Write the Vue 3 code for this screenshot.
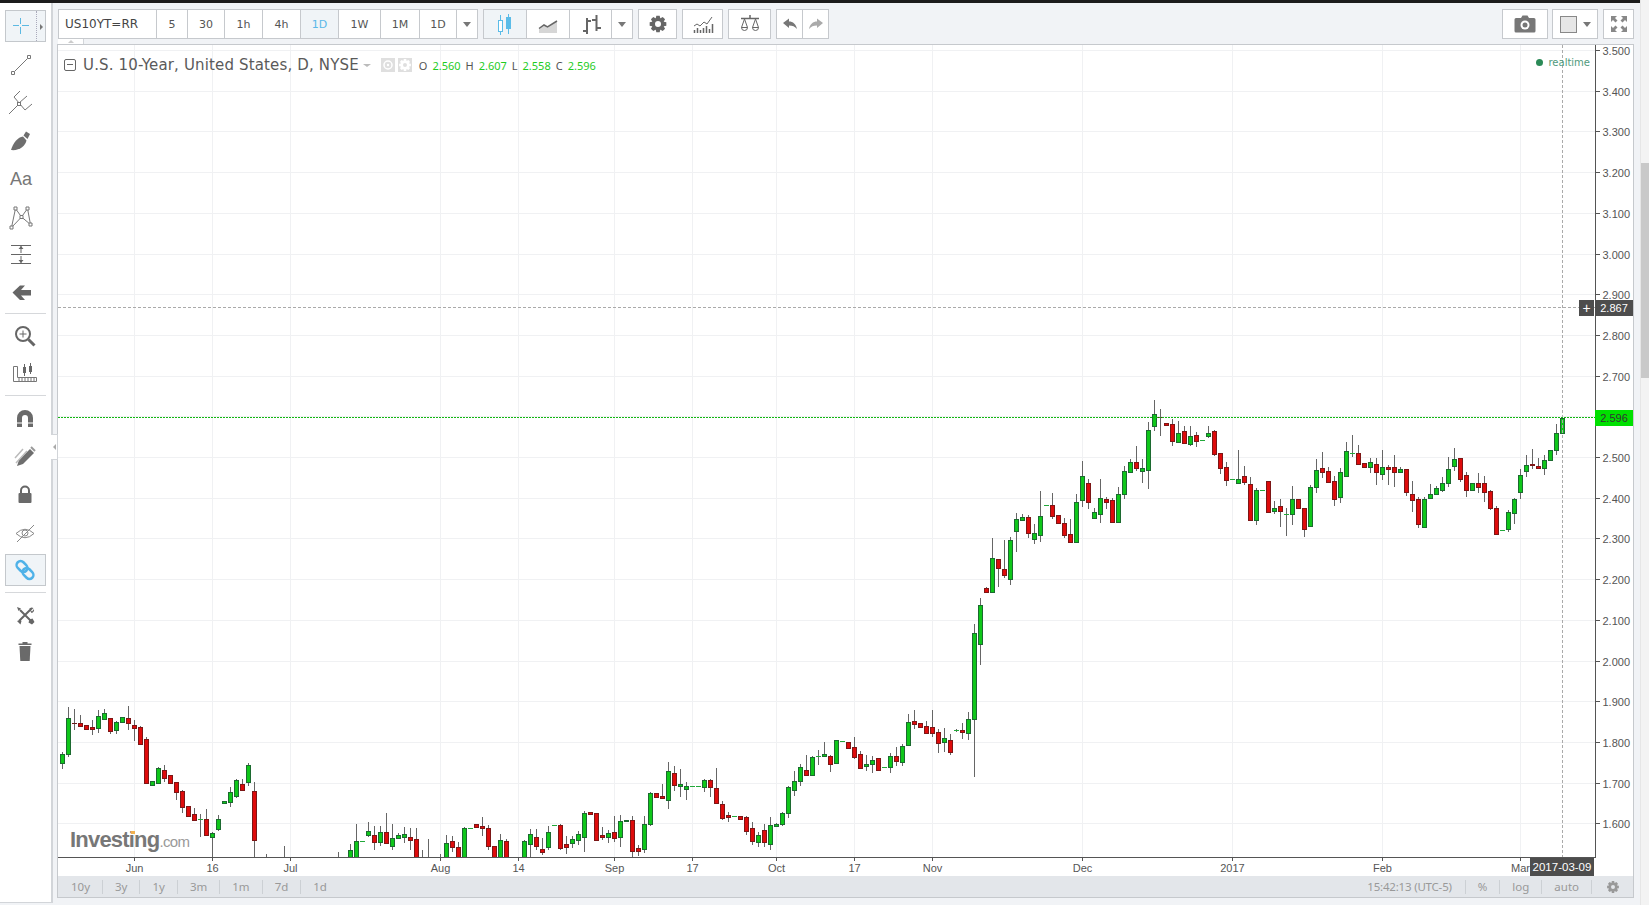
<script setup>
const g = 1, r = 0
const N = null
const candles = []
function seg(start, base, list) {
  list.forEach((c, k) => {
    if (!c) return
    const [wt, bt, bb, wb, col] = c
    const y = z => Math.round(base + z / 3)
    candles.push({
      x: 62.5 + 6 * (start + k),
      wt: wt == null ? null : y(wt),
      wb: wb == null ? null : y(wb),
      bt: bt == null ? null : y(bt),
      bb: bb == null ? null : y(bb),
      up: col === g
    })
  })
}
seg(0, 690, [
  [185,192,218,237,g],[52,85,191,200,g],[57,100,100,120,r],[75,100,107,110,r],[105,106,116,117,r],
  [90,111,116,135,r],[60,79,113,130,g],[57,70,86,90,g],[84,85,122,132,r],[92,97,119,132,g],
  [80,82,97,100,g],[48,85,98,120,r],[90,105,113,152,r],[108,112,161,162,r],[142,148,278,281,r],
  [273,274,284,285,g],[232,235,278,280,g],[226,241,263,276,r],[255,256,278,282,r],[277,277,305,330,r],
  [300,304,350,368,r],[349,349,377,378,r],[355,373,389,392,r],[372,388,388,440,g],[357,388,434,435,r],
  [425,430,440,510,g],[376,388,416,422,g],[334,334,338,338,g],[292,307,335,350,g],[268,271,317,325,g],
  [268,283,299,302,r],[220,226,277,288,g],[277,304,449,510,r],N,[492,N,N,510,r],
  N,N,[468,N,N,510,r],N,N,N,N,N,N,N,N,[487,N,N,510,r],N,
  [462,481,520,520,g],[403,454,520,520,g],[454,454,454,454,g],[396,424,434,440,g],[408,436,455,480,r],
  [408,427,455,468,g],[370,427,458,460,r],[403,445,467,480,g],[430,436,445,447,g],[411,433,440,460,g],
  [414,442,449,480,r],[414,448,520,520,r],[480,N,N,510,r],[447,N,N,510,r],N,[492,N,N,510,r],
  [436,460,520,520,g],[438,454,470,486,r],[457,472,520,520,r],[412,415,520,520,g],[415,415,415,415,g],
  [403,403,410,410,r],[382,409,413,438,r],[406,415,467,480,r],[468,468,520,520,r],[433,451,520,520,g],
  [448,454,520,520,r]
])
seg(77, 690, [
  [450,454,520,520,g],[418,433,461,510,g],[418,442,467,480,r],[445,478,485,495,r],[408,427,470,480,g],
  [406,406,406,406,g],[403,406,473,480,r],[438,463,470,492,r],[438,448,458,473,g],[422,431,449,465,g],
  [362,370,440,485,g],[365,367,371,372,r],[370,370,449,452,r],[410,436,440,450,r],[420,430,440,460,g],
  [378,427,443,455,r],[376,394,440,470,g],[391,391,394,394,g],[378,391,482,520,r],[465,475,482,497,r],
  [378,403,476,488,g],[306,310,401,408,g],[310,310,320,320,r],[282,319,325,328,r],[216,244,329,356,g],
  [228,250,284,303,r],[237,283,287,320,g],[276,289,296,330,g],[289,289,289,289,g],[289,289,289,289,g],
  [268,271,290,306,g],[267,271,290,320,r],[234,295,338,338,r],[334,343,383,390,r],[365,376,380,396,r],
  [379,379,379,379,g],[378,378,387,387,r],[378,382,422,434,r],[397,415,452,465,r],[425,436,455,470,g],
  [403,421,455,470,r],[381,406,461,479,g],[398,403,407,408,g],[367,370,403,408,g],[288,292,368,385,g],
  [243,274,299,318,g],[222,232,272,287,g],[195,241,254,257,r],[197,202,254,255,g],[180,199,199,225,g],
  [157,193,197,200,g],[195,199,223,245,r],[150,151,218,218,g],[154,154,154,154,g],[155,155,173,173,r],
  [142,172,200,208,r],[182,193,233,234,r],[195,222,228,243,g],[198,211,221,248,g],[205,205,239,242,r],
  [232,232,232,232,g],[188,199,230,248,g],[170,199,212,228,r],[162,169,215,228,g],[72,97,164,166,g],
  [60,94,101,117,r],[100,100,110,112,r],[93,109,128,128,r],[60,112,128,140,r],[118,125,158,188,r],
  [115,145,155,186,g],[132,151,186,195,r],[117,121,121,125,g],[100,120,125,146,r],[67,88,128,150,g]
])
seg(152, 480, [
  [432,460,718,890,g],[355,376,493,555,g],[322,325,335,336,r],[175,235,335,337,g],[238,238,265,320,r],
  [180,268,284,293,r],[170,181,296,315,g],[100,118,152,215,g],[103,112,119,120,g],[105,112,160,173,r],
  [132,160,176,192,g],[33,109,164,185,g],[75,75,75,75,g],[40,76,107,117,r],[105,106,128,132,r],
  [115,130,164,175,r],[118,163,187,188,r],[42,67,185,188,g]
])
seg(170, 390, [
  [213,259,329,352,g],[267,280,335,357,r],[354,367,383,384,g],[267,325,371,398,g],[322,328,335,357,r],
  [325,331,395,397,r],[292,313,395,398,g],[228,244,311,327,g],[208,217,245,245,g],[168,217,233,242,r],
  [208,234,242,278,g],[97,121,239,297,g],[30,73,107,123,g],[58,82,82,138,r],[99,99,104,104,r],
  [87,103,152,167,r],[93,130,155,155,g],[108,124,158,158,r],[108,139,161,167,g],[125,135,152,170,r],
  [151,151,151,151,g],[108,129,137,145,g],[120,124,191,197,r],[190,190,233,252,r],[215,232,269,288,r],
  [268,268,268,268,g],[180,268,278,279,g],[228,259,275,285,r],[262,283,389,392,r],[295,301,389,405,g],
  [301,301,301,301,g],[274,274,365,367,r],[333,354,362,373,g],[327,349,362,410,r],[355,372,372,437,g],
  [288,328,371,405,g],[327,328,353,357,r],[355,355,418,440,r],[285,292,407,410,g],[207,241,292,308,g],
  [186,235,245,263,r],[232,244,277,278,r],[258,274,326,348,r]
])
seg(213, 280, [
  [565,577,650,668,g],[487,514,587,592,g],[465,520,520,530,g],[495,520,551,553,r],[549,550,560,562,r],
  [535,547,560,578,g],[533,553,575,614,r],[510,562,581,600,g],[555,562,566,615,r],[525,562,575,620,r],
  [560,568,575,578,g],[568,568,635,647,r],[603,643,659,695,r],[650,658,731,745,r],[652,658,742,745,g],
  [612,643,655,656,g],[617,625,643,645,g],[590,610,629,635,g],[530,568,610,620,g],[504,538,559,572,g],
  [535,535,598,607,r],[577,586,631,652,r],[610,610,631,632,g],[578,610,620,640,r],[588,610,637,665,r],
  [630,634,685,690,r],[678,685,762,764,r],[751,751,751,751,g],[690,697,748,755,g],[655,658,700,732,g],
  [568,586,637,657,g],[525,556,574,590,g],[507,553,556,566,r],[535,559,563,565,r],[525,541,565,585,g],
  [510,511,541,542,g],[432,460,509,525,g],[405,414,460,462,g]
])

const gridX = [134, 212, 290, 440, 518, 614, 692, 776, 854, 932, 1082, 1232, 1382, 1520]
const prices = Array.from({ length: 20 }, (_, k) => ({
  label: (3.5 - 0.1 * k).toFixed(3),
  y: Math.round(50 + 40.7 * k) + 0.5
}))
const dates = [
  ['Jun', 134], ['16', 212], ['Jul', 290], ['Aug', 440], ['14', 518], ['Sep', 614], ['17', 692],
  ['Oct', 776], ['17', 854], ['Nov', 932], ['Dec', 1082], ['2017', 1232], ['Feb', 1382], ['Mar', 1520]
]
const intervals = [
  { t: '5', w: 32 }, { t: '30', w: 38 }, { t: '1h', w: 39 }, { t: '4h', w: 39 },
  { t: '1D', w: 39, on: true }, { t: '1W', w: 43 }, { t: '1M', w: 40 }, { t: '1D', w: 38 }
]
const ranges = ['10y', '3y', '1y', '3m', '1m', '7d', '1d']

function gear(cx, cy, ro, ri, h, n) {
  const pts = []
  for (let i = 0; i < n; i++) {
    const a = (i / n) * Math.PI * 2
    const s = Math.PI / n
    ;[[ri, -s * 0.95], [ro, -s * 0.5], [ro, s * 0.5], [ri, s * 0.95]].forEach(([rad, d]) => {
      pts.push((cx + rad * Math.cos(a + d)).toFixed(2) + ' ' + (cy + rad * Math.sin(a + d)).toFixed(2))
    })
  }
  return 'M' + pts.join('L') + 'Z' +
    `M${cx - h} ${cy}a${h} ${h} 0 1 0 ${2 * h} 0a${h} ${h} 0 1 0 ${-2 * h} 0Z`
}
const gearBig = gear(12, 12, 8.5, 6.3, 3, 8)
const gearTiny = gear(7, 7, 6, 4.4, 2, 8)
</script>

<template>
  <div class="page">
    <div class="app">
      <div class="topline"></div>
      <div class="main">
        <aside class="sidebar">
          <div class="tool selected cross">
            <svg width="30" height="30" viewBox="0 0 30 30" class="ic0"><path d="M7 14.500h6M16 14.500h7M14.500 7v6M14.500 16v7" stroke="#5cb9e2" fill="none"/></svg>
            <span class="dots"></span><span class="tri"></span>
          </div>
          <div class="tool"><svg width="30" height="30" viewBox="0 0 30 30" class="ic"><path d="M8.500 21.500 21.500 8.500" stroke="#777"/><path d="M5.500 21.500h3v3h-3zM21.500 5.500h3v3h-3z" fill="#fff" stroke="#777"/></svg></div>
          <div class="tool"><svg width="30" height="30" viewBox="0 0 30 30" class="ic"><path d="M3 26 13 16M8 9l11 13M8 9l6-6M13 15l8-7M19 22l7-6" stroke="#777" fill="none"/><rect x="11.500" y="14.500" width="3" height="3" fill="#fff" stroke="#777"/></svg></div>
          <div class="tool"><svg width="30" height="30" viewBox="0 0 30 30" class="ic"><path d="M5 24C7 17 12 11 17 10.500l3.500 4C19.500 20 13 25 5 24Z" fill="#6e6e6e"/><path d="M17.500 9.500 20 5.500l4 2.500-2.500 5Z" fill="#6e6e6e"/></svg></div>
          <div class="tool"><span class="aa">Aa</span></div>
          <div class="tool"><svg width="30" height="30" viewBox="0 0 30 30" class="ic"><path d="M5.500 25.500 9.500 6.500 15.500 15 21.500 6.500 24.500 22.500 15.500 15 5.500 25.500" fill="none" stroke="#777"/><path d="M4 24h3v3H4zM8 5h3v3H8zM14 13.500h3v3h-3zM20 5h3v3h-3zM23 21h3v3h-3z" fill="#fff" stroke="#777"/></svg></div>
          <div class="tool"><svg width="30" height="30" viewBox="0 0 30 30" class="ic"><path d="M5 5.500h20M5 14.500h20M5 23.500h20M15 6v7M15 16v7" stroke="#666" fill="none"/><path d="M12.500 9 15 6l2.500 3ZM12.500 20l2.500 3 2.500-3Z" fill="#666"/></svg></div>
          <div class="tool"><svg width="30" height="30" viewBox="0 0 30 30" class="ic"><path d="M6.500 14.500 14 7.500h5l-4 4.500h10v5.500H15l4 4.500h-5Z" fill="#666"/></svg></div>
          <hr class="sep a" />
          <div class="tool"><svg width="30" height="30" viewBox="0 0 30 30" class="ic ic2"><circle cx="13" cy="13" r="7" fill="none" stroke="#666" stroke-width="2"/><path d="M9.500 13h7M13 9.500v7" stroke="#666"/><path d="m18.500 18.500 6 6" stroke="#666" stroke-width="3"/></svg></div>
          <div class="tool"><svg width="30" height="30" viewBox="0 0 30 30" class="ic ic2"><path d="M3.500 7.500v15h23v-4H7.500v-11Z" fill="none" stroke="#777"/><path d="M9 22v-3M12 22v-3M15 22v-3M18 22v-3M21 22v-3M24 22v-3" stroke="#777"/><path d="M14.500 5v12M20.500 4v11" stroke="#666"/><path d="M13 8h3v6h-3zM19 7h3v6h-3z" fill="#666"/></svg></div>
          <hr class="sep b" />
          <div class="tool"><svg width="30" height="30" viewBox="0 0 30 30" class="ic ic2"><path d="M7 23V14a8 8 0 0 1 16 0v9h-5v-9a3 3 0 0 0-6 0v9Z" fill="#6a6a6a"/><path d="M7 19h5M18 19h5" stroke="#fff"/></svg></div>
          <div class="tool"><svg width="30" height="30" viewBox="0 0 30 30" class="ic ic2"><path d="M7 24l2-6L20 7l4 4-11 11Z" fill="#6e6e6e"/><path d="M5 16 13 7M6 21 17 9" stroke="#bbb" stroke-width="1.500" fill="none"/><path d="M21 5l4 4" stroke="#999" stroke-width="2"/></svg></div>
          <div class="tool"><svg width="30" height="30" viewBox="0 0 30 30" class="ic ic2"><path d="M11 14v-3.500a4 4 0 0 1 8 0V14" fill="none" stroke="#666" stroke-width="2"/><rect x="8.500" y="13" width="13" height="10" rx="1" fill="#6a6a6a"/></svg></div>
          <div class="tool"><svg width="30" height="30" viewBox="0 0 30 30" class="ic ic2"><path d="M6 15.500Q15 7 24 15.500 15 24 6 15.500Z" fill="none" stroke="#888"/><circle cx="15" cy="15" r="3" fill="none" stroke="#888"/><path d="M7 24 24 7" stroke="#888"/></svg></div>
          <div class="tool selected link"><svg width="30" height="30" viewBox="0 0 30 30" class="ic0 ic2"><g fill="none" stroke="#4fb2e8" stroke-width="2.500"><rect x="6" y="7.500" width="12" height="8" rx="4" transform="rotate(45 12 11.500)"/><rect x="12" y="14.500" width="12" height="8" rx="4" transform="rotate(45 18 18.500)"/></g></svg></div>
          <hr class="sep c" />
          <div class="tool"><svg width="30" height="30" viewBox="0 0 30 30" class="ic ic2"><path d="M10 10 21 21M20 10 9 21" stroke="#666" stroke-width="2"/><path d="M7 7l4 1.500L8.500 11ZM19 9a3.500 3.500 0 0 1 4.500-1L21 10.500l1 1L24 9a3.500 3.500 0 0 1-2.500 4ZM19.500 19.500l3-1 2 3.500-2.500 2.500-3.500-2ZM7 21l3.500-1 1 1-1 3.500Z" fill="#666"/></svg></div>
          <div class="tool"><svg width="30" height="30" viewBox="0 0 30 30" class="ic ic2"><path d="M9.500 8h11l-.8 15h-9.400Z" fill="#6a6a6a"/><path d="M8.500 5.500h13V7h-13zM12.500 4h5v2h-5z" fill="#6a6a6a"/></svg></div>
          <div class="side-handle"><span></span></div>
        </aside>

        <section class="work">
          <div class="toolbar">
            <div class="group">
              <div class="btn symbol">US10YT=RR</div>
              <div v-for="(b, i) in intervals" :key="i" class="btn" :class="{ on: b.on }" :style="{ width: b.w + 'px' }">{{ b.t }}</div>
              <div class="btn w22"><i class="caret"></i></div>
            </div>
            <div class="group">
              <div class="btn on w44 first">
                <svg width="24" height="24" viewBox="0 0 24 24"><path d="M7.500 3v20M15.500 2v20" stroke="#5bbce8"/><rect x="5.500" y="8.500" width="4" height="11" fill="#fff" stroke="#5bbce8"/><rect x="13" y="5" width="5" height="12" fill="#5bbce8"/></svg>
              </div>
              <div class="btn w44">
                <svg width="24" height="24" viewBox="0 0 24 24"><path d="M3 16.500l5-3.500 3.500 2L21 9v12H3Z" fill="#d6d6d6"/><path d="M3 16.500l5-3.500 3.500 2L21 9" fill="none" stroke="#666" stroke-width="1.500"/></svg>
              </div>
              <div class="btn w43">
                <svg width="24" height="24" viewBox="0 0 24 24"><path d="M8 6v16M17.500 3v16" stroke="#666" stroke-width="2"/><path d="M4 19h4M8 9h4M13 8h4M17.500 16H22" stroke="#666" stroke-width="2"/></svg>
              </div>
              <div class="btn w22"><i class="caret"></i></div>
            </div>
            <div class="group">
              <div class="btn first w39"><svg width="24" height="24" viewBox="0 0 24 24"><path :d="gearBig" fill="#666" fill-rule="evenodd"/></svg></div>
            </div>
            <div class="group">
              <div class="btn first w41"><svg width="24" height="24" viewBox="0 0 24 24"><path d="M3.500 21v-3M6.500 21v-5M9.500 21v-3M12.500 21v-5M15.500 21v-7M18.500 21v-4M21.500 21v-9" stroke="#666" stroke-width="1.500"/><path d="M3 14l3-2 3 2 4-4 3 2 5-7" fill="none" stroke="#666"/></svg></div>
            </div>
            <div class="group">
              <div class="btn first w43"><svg width="24" height="24" viewBox="0 0 24 24"><path d="M3 6.500h18M12 3v3" stroke="#666" stroke-width="1.500"/><path d="M6.500 7 3.500 15.500h6ZM17.500 7l-3 8.500h6Z" fill="none" stroke="#666"/><path d="M3.500 15.500a3 3 0 0 0 6 0ZM14.500 15.500a3 3 0 0 0 6 0Z" fill="#fff" stroke="#666"/></svg></div>
            </div>
            <div class="group">
              <div class="btn first w27"><svg width="18" height="18" viewBox="0 0 18 18"><path d="M2 8 8 3.500v3c4 0 7 2.500 8 7.500-2-2.500-4.500-3.500-8-3.500V13Z" fill="#777"/></svg></div>
              <div class="btn w27"><svg width="18" height="18" viewBox="0 0 18 18"><path d="M16 8 10 3.500v3c-4 0-7 2.500-8 7.500 2-2.500 4.500-3.500 8-3.500V13Z" fill="#aaa"/></svg></div>
            </div>
            <div class="right-tools">
              <div class="btn first w46"><svg width="22" height="18" viewBox="0 0 22 18"><path d="M2 3h5l1.500-2.500h5L15 3h5a1.500 1.500 0 0 1 1.500 1.500V16a1.500 1.500 0 0 1-1.500 1.500H2A1.500 1.500 0 0 1 .5 16V4.500A1.500 1.500 0 0 1 2 3Z" fill="#777"/><circle cx="11" cy="10" r="4.500" fill="#fff"/><circle cx="11" cy="10" r="2.500" fill="#777"/></svg></div>
              <div class="btn first w46 color"><span class="swatch"></span><i class="caret"></i></div>
              <div class="btn first w31"><svg width="20" height="20" viewBox="0 0 20 20"><path d="M2 2h6L6 4l2.500 2.500L6.500 8.500 4 6 2 8ZM18 2v6l-2-2-2.500 2.500-2-2L14 4l-2-2ZM2 18v-6l2 2 2.500-2.500 2 2L6 16l2 2ZM18 18h-6l2-2-2.500-2.500 2-2L16 14l2-2Z" fill="#888"/></svg></div>
            </div>
            <div class="pull-tab"><i></i></div>
          </div>

          <div class="chart">
            <div class="chart-row">
              <div class="plot">
                <svg class="canvas" width="1537" height="812" viewBox="58 45 1537 812">
                  <g stroke="#f0f1f3">
                    <path v-for="x in gridX" :key="'v' + x" :d="`M${x + 0.5} 45V857`" />
                    <path v-for="p in prices" :key="'h' + p.y" :d="`M58 ${p.y}H1595`" />
                  </g>
                  <g v-for="(c, i) in candles" :key="i">
                    <path v-if="c.wt !== null" :d="`M${c.x} ${c.wt}V${c.wb}`" stroke="#666" />
                    <template v-if="c.bt !== null">
                      <path v-if="c.bb === c.bt" :d="`M${c.x - 2.5} ${c.bt + 0.5}h5`" :stroke="c.up ? '#22a83a' : '#6a1a1a'" />
                      <rect v-else :x="c.x - 2" :y="c.bt + 0.5" width="4" :height="c.bb - c.bt" :fill="c.up ? '#0fc71a' : '#de0b0b'" :stroke="c.up ? '#1c6a30' : '#7c1616'" />
                    </template>
                  </g>
                  <path d="M58 307.500H1595" stroke="#aaa" stroke-dasharray="3 2" />
                  <path d="M1562.500 45V857" stroke="#aaa" stroke-dasharray="3 2" />
                  <path d="M58 417.500H1595" stroke="#12b712" stroke-dasharray="2 1" />
                </svg>

                <div class="legend">
                  <span class="minus"></span>
                  <span class="title">U.S. 10-Year, United States, D, NYSE</span>
                  <i class="caret small"></i>
                  <span class="mini"><svg width="14" height="14" viewBox="0 0 14 14"><circle cx="7" cy="7" r="4" fill="none" stroke="#fff" stroke-width="1.500"/><circle cx="7" cy="7" r="1.200" fill="#fff"/></svg></span>
                  <span class="mini"><svg width="14" height="14" viewBox="0 0 14 14"><path :d="gearTiny" fill="#fff" fill-rule="evenodd"/></svg></span>
                  <span class="ohlc"><b>O</b><em>2.560</em><b>H</b><em>2.607</em><b>L</b><em>2.558</em><b>C</b><em>2.596</em></span>
                </div>
                <div class="realtime"><i></i>realtime</div>
                <div class="watermark"><span class="inv">Investing</span><span class="com">.com</span><i></i></div>
                <div class="plus">+</div>
              </div>
              <div class="price-axis">
                <svg width="37" height="812" viewBox="1596 45 37 812">
                  <g v-for="p in prices" :key="p.label">
                    <path :d="`M1596 ${p.y}h4`" stroke="#555" />
                    <text x="1602.500" :y="p.y + 4">{{ p.label }}</text>
                  </g>
                </svg>
                <div class="tag dark">2.867</div>
                <div class="tag green">2.596</div>
              </div>
            </div>
            <div class="date-axis">
              <svg width="1575" height="18" viewBox="58 858 1575 18">
                <g v-for="(d, i) in dates" :key="i">
                  <path :d="`M${d[1] + 0.5} 858v3`" stroke="#555" />
                  <text :x="d[1] + 0.5" y="872">{{ d[0] }}</text>
                </g>
              </svg>
              <div class="date-tag">2017-03-09</div>
            </div>
            <div class="range-bar">
              <div class="ranges">
                <span v-for="t in ranges" :key="t">{{ t }}</span>
              </div>
              <div class="status">
                <span class="time">15:42:13 (UTC-5)</span>
                <span>%</span>
                <span>log</span>
                <span>auto</span>
                <span class="gear-cell"><svg width="14" height="14" viewBox="0 0 14 14"><path :d="gearTiny" fill="#999" fill-rule="evenodd"/></svg></span>
              </div>
            </div>
          </div>
        </section>
      </div>
    </div>
    <div class="scrollbar"><div class="thumb"></div></div>
  </div>
</template>

<style>
html, body { margin: 0; overflow: hidden; }
</style>

<style scoped>
.page {
  width: 1649px;
  height: 905px;
  display: flex;
  overflow: hidden;
  background: #f1f3f6;
  font-family: "DejaVu Sans", sans-serif;
}
.app { width: 1640px; display: flex; flex-direction: column; }
.topline { height: 3px; background: #1c1c1c; flex: none; }
.main { flex: 1; display: flex; min-height: 0; }

.scrollbar { width: 9px; background: #f3f3f3; border-left: 1px solid #e6e6e6; box-sizing: border-box; }
.thumb { margin-top: 163px; height: 215px; background: #c9c9c9; }

.sidebar {
  position: relative;
  width: 53px;
  height: 900px;
  box-sizing: border-box;
  flex: none;
  background: #fff;
  border-right: 2px solid #d2d5d9;
  border-bottom: 1px solid #d2d5d9;
  padding-top: 4px;
}
.tool { height: 38px; display: flex; align-items: center; position: relative; padding-left: 6px; }
.ic { margin-top: 2px; }
.ic2 { margin-left: 4px; }
.aa { font: 18px "Liberation Sans", sans-serif; color: #777; margin: 2px 0 0 4px; }
.selected::before {
  content: "";
  position: absolute;
  left: 5px;
  top: 3px;
  width: 41px;
  height: 32px;
  box-sizing: border-box;
  background: #f0f4f7;
  border: 1px solid #c4c8cc;
}
.selected svg { position: relative; }
.dots { position: absolute; left: 36px; top: 4px; height: 30px; border-left: 1px dotted #aab; }
.tri { position: absolute; left: 40px; top: 17px; border-left: 3px solid #777; border-top: 3px solid transparent; border-bottom: 3px solid transparent; }
.sep { border: 0; border-top: 1px solid #d6d8db; margin: 2px 5px; width: 41px; box-sizing: border-box; }
.sep.b { margin-top: 3px; margin-bottom: 3px; }
.sep.c { margin-top: 3px; margin-bottom: 2px; }
.side-handle {
  position: absolute;
  left: 51px;
  top: 431px;
  width: 7px;
  height: 26px;
  box-sizing: border-box;
  background: #fff;
  border: 1px solid #d2d5d9;
  border-left: 0;
  display: flex;
  align-items: center;
  justify-content: center;
}
.side-handle span { border-right: 3px solid #aaa; border-top: 3px solid transparent; border-bottom: 3px solid transparent; }

.work { margin-left: 4px; width: 1577px; flex: none; display: flex; flex-direction: column; }
.toolbar {
  position: relative;
  height: 41px;
  box-sizing: border-box;
  padding: 6px 0 0 1px;
  display: flex;
  flex: none;
}
.group { display: flex; margin-right: 5px; }
.btn {
  height: 30px;
  box-sizing: border-box;
  background: #fff;
  border: 1px solid #c6c9cd;
  margin-left: -1px;
  display: flex;
  align-items: center;
  justify-content: center;
  font-size: 11px;
  color: #555;
}
.btn.first { margin-left: 0; }
.btn.on { background: #f0f4f7; color: #5bb8e8; }
.symbol { width: 99px; margin-left: 0; justify-content: flex-start; padding-left: 6px; font-size: 12px; color: #444; }
.w22 { width: 22px; } .w27 { width: 27px; } .w31 { width: 31px; } .w39 { width: 39px; }
.w41 { width: 41px; } .w43 { width: 43px; } .w44 { width: 44px; } .w46 { width: 46px; }
.caret { display: block; border-top: 5px solid #777; border-left: 4px solid transparent; border-right: 4px solid transparent; }
.right-tools { margin-left: auto; display: flex; gap: 4px; }
.right-tools .btn + .btn + .btn { margin-left: 1px; }
.color { gap: 6px; }
.swatch { width: 17px; height: 17px; box-sizing: border-box; background: #e6e6e6; border: 1px solid #888; }
.pull-tab {
  position: absolute;
  left: 1px;
  top: 36px;
  width: 25px;
  height: 5px;
  background: #fff;
  border-right: 1px solid #d2d5d9;
}
.pull-tab i {
  position: absolute;
  left: 10px;
  top: 1px;
  border-bottom: 3px solid #ccc;
  border-left: 3px solid transparent;
  border-right: 3px solid transparent;
}

.chart { border: 1px solid #c6c9cd; background: #fff; height: 854px; box-sizing: border-box; display: flex; flex-direction: column; }
.chart-row { display: flex; position: relative; height: 813px; flex: none; }
.plot {
  position: relative;
  width: 1538px;
  height: 813px;
  box-sizing: border-box;
  border-right: 1px solid #555;
  border-bottom: 1px solid #555;
  flex: none;
  overflow: hidden;
}
.canvas { display: block; }
.legend { position: absolute; left: 6px; top: 10px; display: flex; align-items: center; height: 20px; }
.minus { width: 12px; height: 12px; box-sizing: border-box; border: 1px solid #666; border-radius: 2px; position: relative; margin-right: 7px; }
.minus::after { content: ""; position: absolute; left: 2px; right: 2px; top: 4px; border-top: 1px solid #666; }
.title { font-size: 15px; letter-spacing: 0.15px; color: #5a5a5a; white-space: nowrap; }
.caret.small { border-top-width: 3px; border-left-width: 4px; border-right-width: 4px; border-top-color: #bbb; margin: 0 10px 0 4px; }
.mini { width: 14px; height: 14px; background: #dfdfdf; margin-right: 3px; display: block; }
.mini svg { display: block; }
.ohlc { display: flex; font-family: "Noto Sans", sans-serif; font-size: 11px; margin-left: 4px; }
.ohlc b { font-weight: normal; color: #555; margin-right: 5px; }
.ohlc em { font-style: normal; color: #1fcc1f; margin-right: 5px; }
.realtime { position: absolute; right: 5px; top: 12px; display: flex; align-items: center; gap: 5px; font-size: 10px; color: #4f9a7c; }
.realtime i { width: 7px; height: 7px; border-radius: 50%; background: #2b8a57; }
.watermark { position: absolute; left: 12px; top: 782px; display: flex; align-items: baseline; font-family: "Liberation Sans", sans-serif; color: #777; }
.inv { font-size: 22px; font-weight: bold; letter-spacing: -0.8px; }
.com { font-size: 15px; color: #999; letter-spacing: -0.6px; }
.watermark i { position: absolute; left: 61px; top: 4px; width: 4px; height: 3px; background: #f0b050; }
.plus { position: absolute; left: 1521px; top: 255px; width: 15px; height: 16px; background: #4d4d4d; color: #fff; font: 14px/16px "Liberation Sans", sans-serif; text-align: center; }

.price-axis { position: relative; width: 37px; flex: none; }
.price-axis svg { display: block; }
.price-axis text { font: 11px "Liberation Sans", sans-serif; fill: #555; }
.tag { position: absolute; left: -1px; width: 38px; height: 16px; font: 11px/16px "Liberation Sans", sans-serif; text-align: center; }
.tag.dark { top: 255px; background: #4d4d4d; color: #fff; }
.tag.green { top: 365px; background: #00e000; color: #333; }

.date-axis { position: relative; height: 18px; flex: none; }
.date-axis svg { display: block; }
.date-axis text { font: 11px "Liberation Sans", sans-serif; fill: #555; text-anchor: middle; }
.date-tag { position: absolute; left: 1472px; top: 0; width: 64px; height: 18px; background: #4d4d4d; color: #fff; font: 11.500px/18px "Liberation Sans", sans-serif; text-align: center; }

.range-bar { flex: 1; background: #e3e6ea; display: flex; justify-content: space-between; align-items: center; font-family: "Noto Sans", sans-serif; font-size: 11.500px; color: #999; }
.ranges, .status { display: flex; align-items: center; }
.ranges span { padding: 0 12px; border-right: 1px solid #ccd0d4; line-height: 14px; }
.ranges span:first-child { padding-left: 13px; }
.ranges span:last-child { border-right: 0; }
.status span { padding: 0 12px; border-right: 1px solid #ccd0d4; line-height: 14px; }
.status .time { letter-spacing: -0.2px; padding-right: 13px; }
.status .gear-cell { border-right: 0; padding: 0 13px 0 14px; display: flex; }
</style>
